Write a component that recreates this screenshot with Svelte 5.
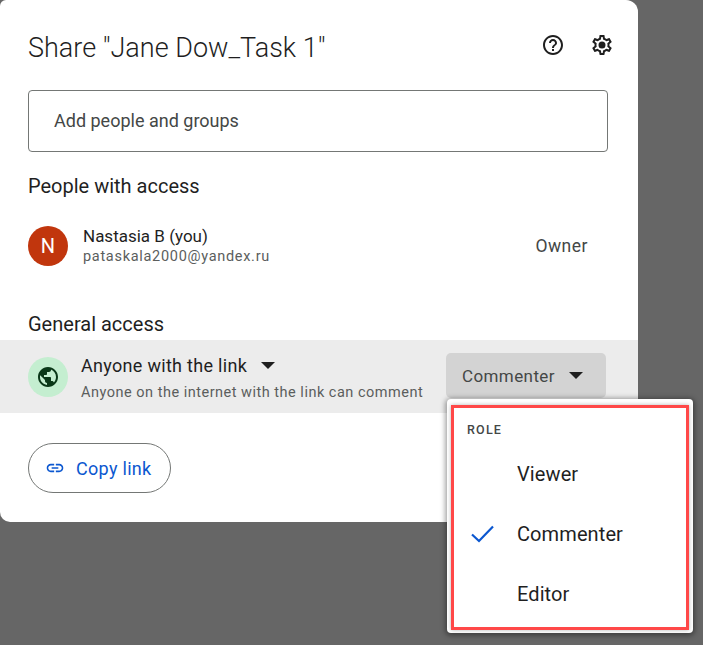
<script>
  const roles = [
    { name: 'Viewer', checked: false },
    { name: 'Commenter', checked: true },
    { name: 'Editor', checked: false },
  ];
</script>

<div class="page">
  <section class="dialog">
    <header>
      <h1>Share "Jane Dow_Task 1"</h1>
      <div class="tools">
        <svg width="24" height="24" viewBox="0 0 24 24" fill="#1f1f1f">
          <path d="M11 18h2v-2h-2v2zm1-16C6.48 2 2 6.48 2 12s4.48 10 10 10 10-4.48 10-10S17.52 2 12 2zm0 18c-4.41 0-8-3.59-8-8s3.59-8 8-8 8 3.59 8 8-3.59 8-8 8zm0-14c-2.21 0-4 1.79-4 4h2c0-1.1.9-2 2-2s2 .9 2 2c0 2-3 1.75-3 5h2c0-2.25 3-2.5 3-5 0-2.21-1.79-4-4-4z" />
        </svg>
        <svg width="24" height="24" viewBox="0 0 24 24" fill="#1f1f1f">
          <path d="M19.43 12.98c.04-.32.07-.64.07-.98s-.03-.66-.07-.98l2.11-1.65c.19-.15.24-.42.12-.64l-2-3.46c-.12-.22-.39-.3-.61-.22l-2.49 1c-.52-.4-1.08-.73-1.69-.98l-.38-2.65C14.46 2.18 14.25 2 14 2h-4c-.25 0-.46.18-.49.42l-.38 2.65c-.61.25-1.17.59-1.69.98l-2.49-1c-.23-.09-.49 0-.61.22l-2 3.46c-.13.22-.07.49.12.64l2.11 1.65c-.04.32-.07.65-.07.98s.03.66.07.98l-2.11 1.65c-.19.15-.24.42-.12.64l2 3.46c.12.22.39.3.61.22l2.49-1c.52.4 1.08.73 1.69.98l.38 2.65c.03.24.24.42.49.42h4c.25 0 .46-.18.49-.42l.38-2.65c.61-.25 1.17-.59 1.69-.98l2.49 1c.23.09.49 0 .61-.22l2-3.46c.12-.22.07-.49-.12-.64l-2.11-1.65zM17.45 11.27c.04.31.05.52.05.73s-.02.43-.05.73l-.14 1.13.89.7 1.08.84-.7 1.21-1.27-.51-1.04-.42-.9.68c-.43.32-.84.56-1.25.73l-1.06.43-.16 1.13-.2 1.35h-1.4l-.19-1.35-.16-1.13-1.06-.43c-.43-.18-.83-.41-1.23-.71l-.91-.7-1.06.43-1.27.51-.7-1.21 1.08-.84.89-.7-.14-1.13c-.03-.31-.05-.54-.05-.74s.02-.43.05-.73l.14-1.13-.89-.7-1.08-.84.7-1.21 1.27.51 1.04.42.9-.68c.43-.32.84-.56 1.25-.73l1.06-.43.16-1.13.2-1.35h1.39l.19 1.35.16 1.13 1.06.43c.43.18.83.41 1.23.71l.91.7 1.06-.43 1.27-.51.7 1.21-1.07.85-.89.7.14 1.13zM12 8.5a3.5 3.5 0 1 0 0 7 3.5 3.5 0 0 0 0-7z" />
        </svg>
      </div>
    </header>

    <div class="field">Add people and groups</div>

    <h2 class="people-head">People with access</h2>
    <div class="person">
      <div class="avatar">N</div>
      <div class="who">
        <div class="name">Nastasia B (you)</div>
        <div class="mail">pataskala2000@yandex.ru</div>
      </div>
      <div class="owner">Owner</div>
    </div>

    <h2 class="general-head">General access</h2>
    <div class="access">
      <div class="globe">
        <svg width="24" height="24" viewBox="0 0 24 24" fill="#0a3818">
          <path d="M12 2C6.48 2 2 6.48 2 12s4.48 10 10 10 10-4.48 10-10S17.52 2 12 2zM4 12c0-.61.08-1.21.21-1.78L8.99 15v1c0 1.1.9 2 2 2v1.93C7.06 19.43 4 16.07 4 12zm13.89 5.4c-.26-.81-1-1.4-1.9-1.4h-1v-3c0-.55-.45-1-1-1h-6v-2h2c.55 0 1-.45 1-1V7h2c1.1 0 2-.9 2-2v-.41C17.92 5.77 20 8.65 20 12c0 2.08-.81 3.98-2.11 5.4z" />
        </svg>
      </div>
      <div class="scope">
        <div class="scope-name">Anyone with the link <span class="caret"></span></div>
        <div class="scope-note">Anyone on the internet with the link can comment</div>
      </div>
      <div class="role-btn">Commenter <span class="caret"></span></div>
    </div>

    <button class="copy" type="button">
      <svg width="20" height="20" viewBox="0 0 24 24" fill="#0b57d0">
        <path d="M3.9 12c0-1.71 1.39-3.1 3.1-3.1h4V7H7c-2.76 0-5 2.24-5 5s2.24 5 5 5h4v-1.9H7c-1.71 0-3.1-1.39-3.1-3.1zM8 13h8v-2H8v2zm9-6h-4v1.9h4c1.71 0 3.1 1.39 3.1 3.1s-1.39 3.1-3.1 3.1h-4V17h4c2.76 0 5-2.24 5-5s-2.24-5-5-5z" />
      </svg>
      Copy link
    </button>
  </section>

  <!-- menu lies over the dialog -->
  <div class="menu">
    <div class="menu-inner">
      <div class="menu-title">ROLE</div>
      {#each roles as role}
        <div class="menu-item">
          <span class="tick">
            {#if role.checked}
              <svg width="26" height="20" viewBox="0 0 26 20" fill="none" stroke="#0b57d0" stroke-width="2.2">
                <path d="M2 10.5 L9 17 L23 2.5" />
              </svg>
            {/if}
          </span>
          {role.name}
        </div>
      {/each}
    </div>
  </div>
</div>

<style>
  :global(body) {
    margin: 0;
    background: #666666;
  }
  .page {
    position: relative;
    width: 703px;
    height: 645px;
    overflow: hidden;
    font-family: Roboto, sans-serif;
    color: #1f1f1f;
  }
  .dialog {
    width: 638px;
    height: 522px;
    box-sizing: border-box;
    background: #fff;
    border-radius: 6px 12px 0 10px;
    display: flex;
    flex-direction: column;
  }
  header {
    height: 90px;
    padding: 0 24px 0 28px;
    display: flex;
    justify-content: space-between;
    align-items: flex-start;
  }
  h1 {
    margin: 31px 0 0;
    font-size: 27px;
    line-height: 34px;
    font-weight: 300;
  }
  .tools {
    margin-top: 33px;
    display: flex;
    gap: 25px;
  }
  .field {
    margin: 0 30px 0 28px;
    height: 62px;
    box-sizing: border-box;
    border: 1px solid #747775;
    border-radius: 4px;
    padding: 0 0 2px 25px;
    display: flex;
    align-items: center;
    font-size: 18px;
    color: #444746;
  }
  h2 {
    margin: 0 0 0 28px;
    font-size: 20px;
    line-height: 26px;
    font-weight: 400;
  }
  .people-head {
    margin-top: 21px;
  }
  .person {
    margin: 27px 50px 0 28px;
    display: flex;
    align-items: center;
    height: 40px;
  }
  .avatar {
    width: 40px;
    height: 40px;
    border-radius: 50%;
    background: #c1360d;
    color: #fff;
    font-size: 20px;
    display: flex;
    align-items: center;
    justify-content: center;
  }
  .who {
    margin-left: 15px;
    flex: 1;
  }
  .name {
    font-size: 17px;
    line-height: 22px;
  }
  .mail {
    font-size: 14.5px;
    line-height: 20px;
    letter-spacing: 0.7px;
    color: #5b5e5d;
  }
  .owner {
    font-size: 17.5px;
    letter-spacing: 0.5px;
    color: #444746;
  }
  .general-head {
    margin-top: 45px;
  }
  .access {
    margin-top: 3px;
    height: 73px;
    background: #ececec;
    padding: 0 32px 0 28px;
    display: flex;
    align-items: center;
  }
  .globe {
    width: 40px;
    height: 40px;
    border-radius: 50%;
    background: #c4eed0;
    display: flex;
    align-items: center;
    justify-content: center;
  }
  .scope {
    margin-left: 13px;
    padding-top: 3px;
    flex: 1;
  }
  .scope-name {
    font-size: 18px;
    line-height: 24px;
    letter-spacing: 0.3px;
    display: flex;
    align-items: center;
  }
  .scope-name .caret {
    margin-left: 14px;
  }
  .scope-note {
    font-size: 14.5px;
    line-height: 20px;
    letter-spacing: 0.5px;
    color: #5b5e5d;
    margin-top: 5px;
  }
  .caret {
    display: inline-block;
    width: 0;
    height: 0;
    border-left: 7px solid transparent;
    border-right: 7px solid transparent;
    border-top: 7px solid #1f1f1f;
  }
  .role-btn {
    width: 160px;
    height: 45px;
    margin-bottom: 2px;
    box-sizing: border-box;
    background: #d3d3d3;
    border-radius: 5px;
    padding-left: 16px;
    display: flex;
    align-items: center;
    font-size: 17px;
    letter-spacing: 0.4px;
    color: #444746;
  }
  .role-btn .caret {
    margin-left: 14px;
  }
  .copy {
    margin: 30px 0 0 28px;
    width: 143px;
    height: 50px;
    box-sizing: border-box;
    background: #fff;
    border: 1px solid #747775;
    border-radius: 25px;
    padding: 0 0 0 16px;
    display: flex;
    align-items: center;
    gap: 11px;
    font-family: inherit;
    font-size: 18px;
    letter-spacing: 0.3px;
    color: #0b57d0;
  }
  .menu {
    position: absolute;
    left: 447px;
    top: 399px;
    width: 246px;
    height: 234px;
    box-sizing: border-box;
    padding: 6px 4px 3px 4px;
    background: #fff;
    border-radius: 4px;
    box-shadow: 0 1px 5px 2px rgba(0, 0, 0, 0.35);
  }
  .menu-inner {
    height: 100%;
    box-sizing: border-box;
    border: 3px solid #ff4848;
    box-shadow: 0 0 4px rgba(0, 0, 0, 0.3);
  }
  .menu-title {
    margin: 14px 0 0 13px;
    font-size: 12.5px;
    line-height: 16px;
    font-weight: 500;
    letter-spacing: 1.2px;
    color: #444746;
  }
  .menu-item {
    height: 60px;
    display: flex;
    align-items: center;
    font-size: 20px;
    letter-spacing: 0.1px;
    color: #1f1f1f;
  }
  .menu-title + .menu-item {
    margin-top: 6px;
  }
  .tick {
    width: 63px;
    padding-left: 16px;
    box-sizing: border-box;
    display: flex;
  }
</style>
